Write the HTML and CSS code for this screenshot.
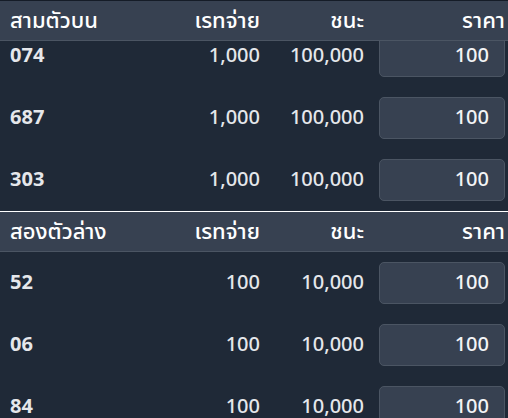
FILE: index.html
```html
<!DOCTYPE html>
<html lang="th">
<head>
  <meta charset="UTF-8">
  <meta name="viewport" content="width=device-width, initial-scale=1.0">
  <title>Bet slip</title>
  <link rel="stylesheet" href="styles.css">
</head>
<body>

<div class="slip">
  <!-- 3 top -->
  <div class="group first">
    <div class="row head">
      <span>สามตัวบน</span>
      <span class="num">เรทจ่าย</span>
      <span class="num">ชนะ</span>
      <span class="num">ราคา</span>
    </div>
    <div class="rows">
      <div class="row">
        <span class="no">074</span>
        <span class="num">1,000</span>
        <span class="num">100,000</span>
        <span class="cell"><input class="price" type="text" value="100"></span>
      </div>
      <div class="row">
        <span class="no">687</span>
        <span class="num">1,000</span>
        <span class="num">100,000</span>
        <span class="cell"><input class="price" type="text" value="100"></span>
      </div>
      <div class="row">
        <span class="no">303</span>
        <span class="num">1,000</span>
        <span class="num">100,000</span>
        <span class="cell"><input class="price" type="text" value="100"></span>
      </div>
    </div>
  </div>

  <!-- 2 bottom -->
  <div class="group">
    <div class="row head">
      <span>สองตัวล่าง</span>
      <span class="num">เรทจ่าย</span>
      <span class="num">ชนะ</span>
      <span class="num">ราคา</span>
    </div>
    <div class="rows">
      <div class="row">
        <span class="no">52</span>
        <span class="num">100</span>
        <span class="num">10,000</span>
        <span class="cell"><input class="price" type="text" value="100"></span>
      </div>
      <div class="row">
        <span class="no">06</span>
        <span class="num">100</span>
        <span class="num">10,000</span>
        <span class="cell"><input class="price" type="text" value="100"></span>
      </div>
      <div class="row">
        <span class="no">84</span>
        <span class="num">100</span>
        <span class="num">10,000</span>
        <span class="cell"><input class="price" type="text" value="100"></span>
      </div>
    </div>
  </div>
</div>

</body>
</html>
```

FILE: styles.css
```css
body {
  margin: 0;
  background: #1f2937;
  font-family: 'Noto Sans', 'Noto Sans Thai', sans-serif;
  color: #e5e7eb;
  font-size: 20px;
  overflow: hidden;
}
.slip {
  width: 508px;
}
.group {
  border-top: 1px solid #ffffff;
}
.group.first {
  border-top-color: #151c27;
}
.row {
  display: grid;
  grid-template-columns: 1fr 100px 104px 141px;
  align-items: center;
  padding: 10px 3px 10px 10px;
  height: 42px;
}
.row span {
  padding-bottom: 3px;
}
.row.head {
  position: relative;
  z-index: 1;
  height: 39px;
  padding-top: 0;
  padding-bottom: 0;
  background: #374151;
  border-bottom: 1px solid #4b5563;
  color: #ffffff;
  font-size: 22px;
}
.row.head span {
  font-weight: 500;
  padding-bottom: 0;
}
/* the first list is scrolled a little under its header */
.first .rows {
  margin-top: -16px;
}
.num {
  text-align: right;
  font-weight: 500;
}
.no {
  font-weight: 700;
}
.row .cell {
  display: flex;
  justify-content: flex-end;
  padding-bottom: 0;
}
.price {
  box-sizing: border-box;
  width: 126px;
  height: 42px;
  padding: 0 15px 3px;
  background: #374151;
  border: 1px solid #4b5563;
  border-radius: 5px;
  color: #f3f4f6;
  font-family: inherit;
  font-size: 20px;
  font-weight: 500;
  text-align: right;
  outline: none;
}
```
